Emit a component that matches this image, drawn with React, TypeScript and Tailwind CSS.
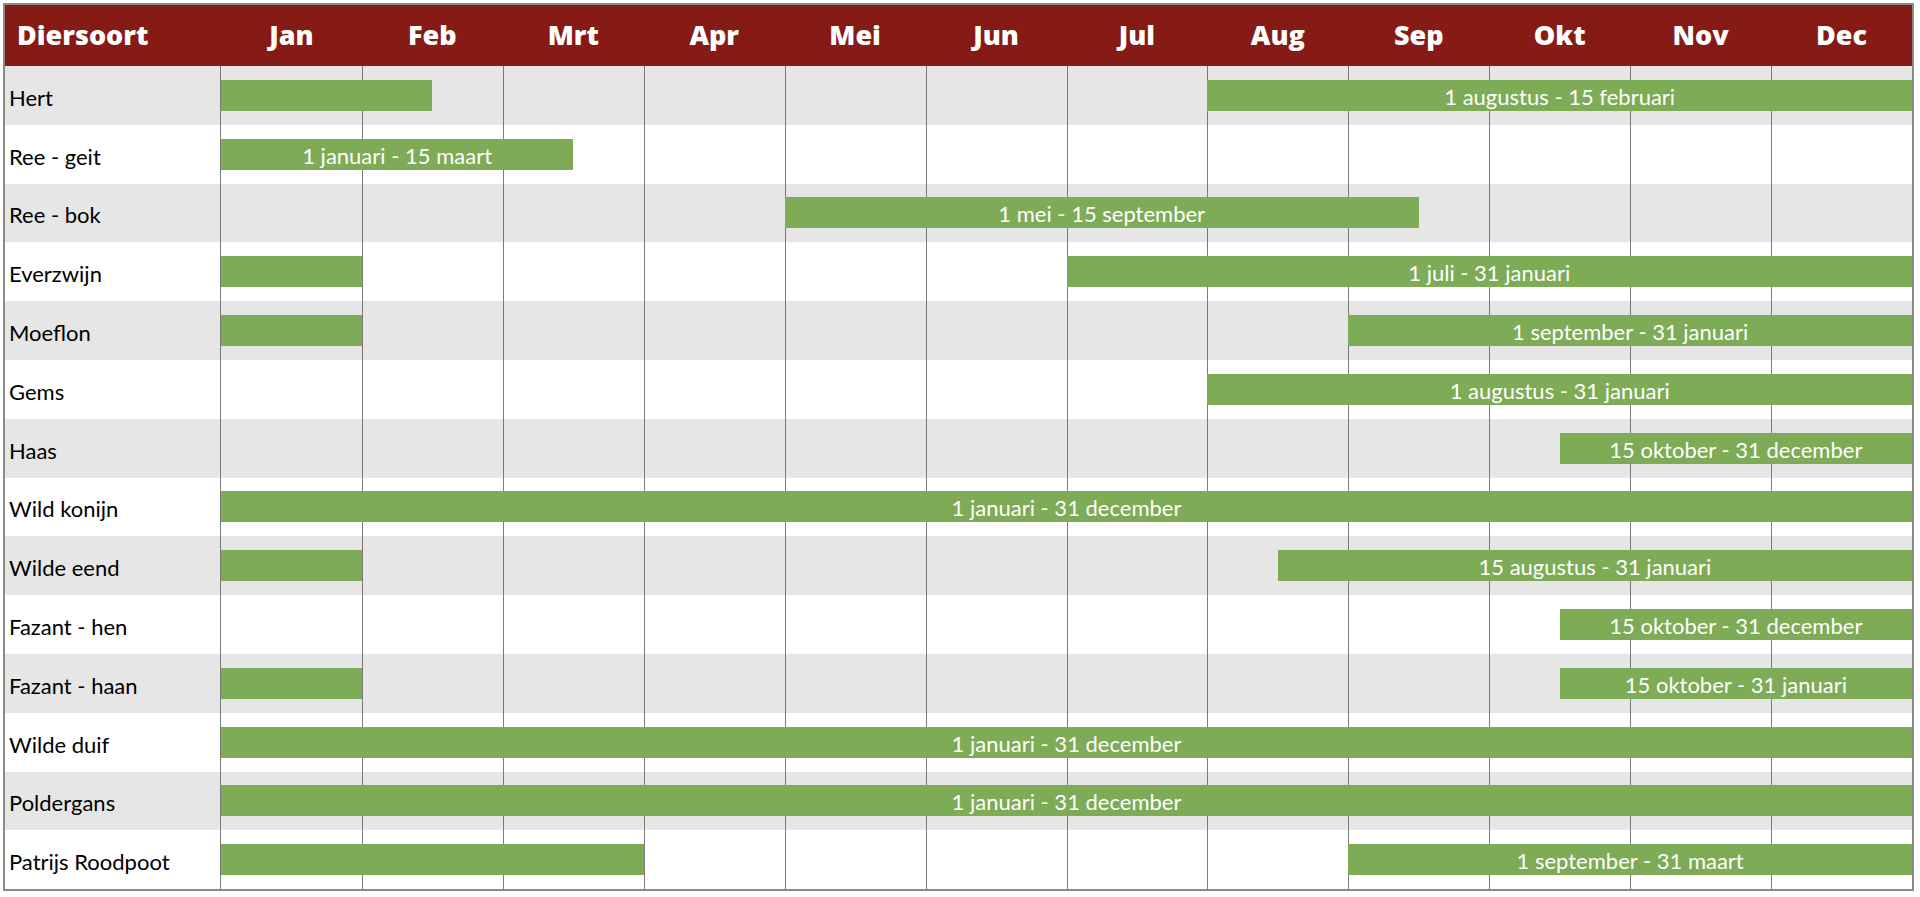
const months = ['Jan', 'Feb', 'Mrt', 'Apr', 'Mei', 'Jun', 'Jul', 'Aug', 'Sep', 'Okt', 'Nov', 'Dec']

// bar positions are in half-months: 0 = 1 januari, 24 = 31 december
interface Bar {
  from: number
  to: number
  label?: string
}

interface Season {
  name: string
  bars: Bar[]
}

const seasons: Season[] = [
  { name: 'Hert', bars: [{ from: 0, to: 3 }, { from: 14, to: 24, label: '1 augustus - 15 februari' }] },
  { name: 'Ree - geit', bars: [{ from: 0, to: 5, label: '1 januari - 15 maart' }] },
  { name: 'Ree - bok', bars: [{ from: 8, to: 17, label: '1 mei - 15 september' }] },
  { name: 'Everzwijn', bars: [{ from: 0, to: 2 }, { from: 12, to: 24, label: '1 juli - 31 januari' }] },
  { name: 'Moeflon', bars: [{ from: 0, to: 2 }, { from: 16, to: 24, label: '1 september - 31 januari' }] },
  { name: 'Gems', bars: [{ from: 14, to: 24, label: '1 augustus - 31 januari' }] },
  { name: 'Haas', bars: [{ from: 19, to: 24, label: '15 oktober - 31 december' }] },
  { name: 'Wild konijn', bars: [{ from: 0, to: 24, label: '1 januari - 31 december' }] },
  { name: 'Wilde eend', bars: [{ from: 0, to: 2 }, { from: 15, to: 24, label: '15 augustus - 31 januari' }] },
  { name: 'Fazant - hen', bars: [{ from: 19, to: 24, label: '15 oktober - 31 december' }] },
  { name: 'Fazant - haan', bars: [{ from: 0, to: 2 }, { from: 19, to: 24, label: '15 oktober - 31 januari' }] },
  { name: 'Wilde duif', bars: [{ from: 0, to: 24, label: '1 januari - 31 december' }] },
  { name: 'Poldergans', bars: [{ from: 0, to: 24, label: '1 januari - 31 december' }] },
  { name: 'Patrijs Roodpoot', bars: [{ from: 0, to: 6 }, { from: 16, to: 24, label: '1 september - 31 maart' }] },
]

export default function App() {
  return (
    <div className="min-h-screen bg-white pl-[3px] pt-[3px] font-['Lato',sans-serif]">
      <div className="w-[1911px] border-2 border-[#8a8a8a]">
        <div className="grid h-[61px] grid-cols-[216px_repeat(12,minmax(0,1fr))] items-center bg-[#861a14] font-['Open_Sans',sans-serif] text-[27px] font-extrabold text-white">
          <div className="pl-3">Diersoort</div>
          {months.map((m) => (
            <div key={m} className="text-center">
              {m}
            </div>
          ))}
        </div>

        {seasons.map((s, i) => (
          <div
            key={s.name}
            className={`grid h-[58.8px] grid-cols-[216px_repeat(24,minmax(0,1fr))] ${
              i % 2 === 0 ? 'bg-[#e6e6e6]' : 'bg-white'
            }`}
          >
            <div className="col-start-1 row-start-1 flex items-center border-r border-[#7a7a7a] pl-1 pt-1 text-[22px] text-black">
              {s.name}
            </div>
            {months.map((m, j) => (
              <div
                key={m}
                className={`row-start-1 col-span-2 ${j > 0 ? 'border-l border-[#7a7a7a]' : ''}`}
                style={{ gridColumnStart: j * 2 + 2 }}
              />
            ))}
            {s.bars.map((b) => (
              <div
                key={b.from}
                className="relative row-start-1 flex h-[31px] items-center justify-center self-center bg-[#7eab55] pt-0.5 text-[22px] whitespace-nowrap text-white"
                style={{ gridColumn: `${b.from + 2} / ${b.to + 2}` }}
              >
                {b.label}
              </div>
            ))}
          </div>
        ))}
      </div>
    </div>
  )
}
